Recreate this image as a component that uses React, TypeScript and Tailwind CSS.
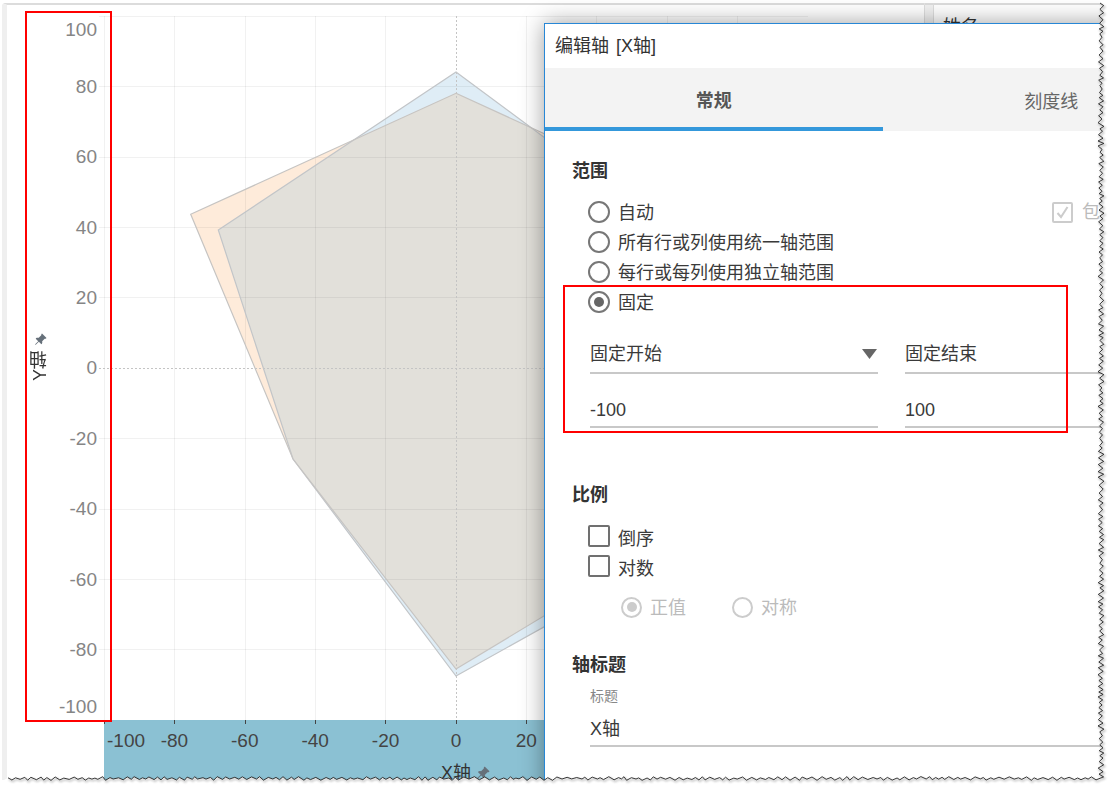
import { BsPinAngleFill } from "react-icons/bs";

const yLabels = ["100", "80", "60", "40", "20", "0", "-20", "-40", "-60", "-80", "-100"];
const xLabels = ["-100", "-80", "-60", "-40", "-20", "0", "20"];
const gridX = [104.5, 174.5, 245.5, 315.5, 385.5, 526.5, 596.5, 667.5, 737.5, 808.5];
const gridY = [16.5, 86.5, 157.5, 227.5, 297.5, 438.5, 509.5, 579.5, 649.5, 720.5];

const BLUE = "456,72 700,253 700,540 456,676 293,459 218.3,230";
const ORANGE = "456,93.3 700,205 700,522 456,669 293,459 190.7,214.3";

function buildTear() {
  let seed = 17;
  const rnd = () => {
    seed = (seed * 16807) % 2147483647;
    return seed / 2147483647;
  };
  const pts: string[] = [];
  let side = 1;
  for (let y = 3; y < 778; y += 2.2 + rnd() * 1.8) {
    side = -side;
    pts.push(`${(1101 + side * (1 + rnd() * 2)).toFixed(1)},${y.toFixed(1)}`);
  }
  for (let x = 1101; x > 4; x -= 2.5 + rnd() * 3) {
    side = -side;
    pts.push(`${x.toFixed(1)},${(778.5 + side * (0.4 + rnd() * 1.5)).toFixed(1)}`);
  }
  return pts.join(" L");
}
const tear = buildTear();

function Radio({ on, muted, size = "w-[22px] h-[22px]" }: { on?: boolean; muted?: boolean; size?: string }) {
  return (
    <span
      className={`${size} shrink-0 rounded-full border-2 flex items-center justify-center ${
        muted ? "border-[#cccccc]" : "border-[#777777]"
      }`}
    >
      {on && <span className={`w-[10px] h-[10px] rounded-full ${muted ? "bg-[#cccccc]" : "bg-[#666666]"}`} />}
    </span>
  );
}

function RadioRow({ label, on, children }: { label: string; on?: boolean; children?: React.ReactNode }) {
  return (
    <div className="h-[30px] flex items-center gap-[8px]">
      <Radio on={on} />
      <span className="whitespace-nowrap pt-[2px]">{label}</span>
      {children}
    </div>
  );
}

function CheckRow({ label }: { label: string }) {
  return (
    <div className="h-[30px] flex items-center gap-[8px]">
      <span className="w-[22px] h-[22px] shrink-0 border-2 border-[#707070] rounded-[2px]" />
      <span className="mt-[5px]">{label}</span>
    </div>
  );
}

function Heading({ children, className = "" }: { children: React.ReactNode; className?: string }) {
  return <div className={`font-bold text-[#333333] ${className}`}>{children}</div>;
}

export default function App() {
  return (
    <div className="relative w-[1113px] h-[790px] overflow-hidden bg-white text-[18px] leading-[26px] text-[#3a3a3a] [font-family:'Liberation_Sans','Noto_Sans_CJK_SC',sans-serif]">
      <div className="flex h-full pt-[3px] pl-[2px]">
        {/* worksheet panel */}
        <div className="w-[923px] h-full shrink-0 border-t-2 border-[#dcdcdc] border-l-[5px] border-l-[#efefef] border-r border-r-[#dddddd] rounded-tl-[3px] flex pt-[11px]">
          {/* Y axis */}
          <div className="w-[90px] shrink-0 h-[704px] flex">
            <div className="w-[23px] shrink-0" />
            <div className="w-[20px] shrink-0 flex items-center justify-center text-[#333333]">
              <div className="flex flex-col items-center gap-[5px] mb-[22px]">
                <BsPinAngleFill className="w-[13px] h-[13px] text-[#66707a]" />
                <span className="[writing-mode:vertical-rl] rotate-180 whitespace-nowrap">Y轴</span>
              </div>
            </div>
            <div className="flex-1 flex flex-col text-[19px] text-[#858585]">
              {yLabels.map((l, i) => (
                <div
                  key={l}
                  className={`flex justify-end ${
                    i === 0
                      ? "h-[35.2px] items-start pt-[1px]"
                      : i === 10
                      ? "h-[35.2px] items-end"
                      : "h-[70.4px] items-center pt-[1px]"
                  }`}
                >
                  {l}
                </div>
              ))}
            </div>
          </div>

          {/* plot + X axis */}
          <div className="ml-[2px] flex flex-col">
            <svg width="709" height="704" viewBox="99 16 709 704" className="block shrink-0">
              <defs>
                <clipPath id="blueClip">
                  <polygon points={BLUE} />
                </clipPath>
              </defs>
              <polygon points={BLUE} fill="#dfedf6" />
              <polygon points={ORANGE} fill="#feebda" />
              <polygon points={ORANGE} fill="#e2e0da" clipPath="url(#blueClip)" />
              {gridX.map((x) => (
                <line key={x} x1={x} x2={x} y1="16" y2="720" stroke="rgba(0,0,0,0.055)" />
              ))}
              {gridY.map((y) => (
                <line key={y} x1="99" x2="808" y1={y} y2={y} stroke="rgba(0,0,0,0.055)" />
              ))}
              <line x1="456.5" x2="456.5" y1="16" y2="720" stroke="#c4c4c4" strokeDasharray="2 2" />
              <line x1="99" x2="808" y1="368.5" y2="368.5" stroke="#c4c4c4" strokeDasharray="2 2" />
              <polygon points={BLUE} fill="none" stroke="#c2c5c8" strokeWidth="1.2" />
              <polygon points={ORANGE} fill="none" stroke="#c6c4c2" strokeWidth="1.2" />
            </svg>
            <div className="ml-[5px] w-[704px] flex-1 bg-[#8bc1d3] text-[#444444]">
              <div className="flex h-[40px] text-[19px]">
                {xLabels.map((l, i) => (
                  <div
                    key={l}
                    className={`h-full flex items-center pt-[2px] whitespace-nowrap ${
                      i === 0 ? "w-[35.2px] justify-start pl-[3px]" : "w-[70.4px] justify-center"
                    }`}
                  >
                    {l}
                  </div>
                ))}
              </div>
              <div className="flex items-center gap-[5px] pl-[337px]">
                <span className="text-[#333333]">X轴</span>
                <BsPinAngleFill className="w-[14px] h-[14px] text-[#66707a]" />
              </div>
            </div>
          </div>
        </div>

        {/* gutter */}
        <div className="w-[8px] h-full shrink-0 bg-[#f1f1f1] border-t-2 border-[#dcdcdc]" />

        {/* side card */}
        <div className="flex-1 h-full border-t-2 border-[#dcdcdc] border-l border-l-[#dddddd] pl-[9px] pt-[9px] text-[#333333]">
          姓名
        </div>
      </div>

      {/* axis ticks sit on the band */}
      <svg width="445" height="5" viewBox="104 720 445 5" className="absolute left-[104px] top-[720px]">
        {[104.5, 174.5, 245.5, 315.5, 385.5, 456.5, 526.5].map((x) => (
          <line key={x} x1={x} x2={x} y1="720" y2="724" stroke="#444444" />
        ))}
      </svg>

      {/* dialog window */}
      <div className="absolute left-[544px] top-[23px] w-[677px] h-[800px] bg-white border border-[#2787d6] shadow-[0_0_22px_rgba(0,0,0,0.38)] text-[#3a3a3a]">
        <div className="h-[44px] pl-[10px] flex items-center text-[#333333] whitespace-nowrap [word-spacing:2px]">编辑轴 [X轴]</div>
        <div className="grid grid-cols-2 h-[63px] bg-[#f3f3f3]">
          <div className="flex items-center justify-center border-b-4 border-[#3498db] font-bold text-[#555555] pt-[7px]">
            常规
          </div>
          <div className="flex items-center justify-center text-[#666666] pt-[4px]">刻度线</div>
        </div>

        <div className="pl-[27px] pt-[27px]">
          <Heading>范围</Heading>
          <div className="pl-[16px] mt-[13px]">
            <RadioRow label="自动">
              <span className="ml-[390px] flex items-center gap-[9px] text-[#bbbbbb] whitespace-nowrap">
                <span className="w-[21px] h-[21px] border-2 border-[#cccccc] rounded-[2px] flex items-center justify-center">
                  <svg width="15" height="15" viewBox="0 0 15 15" fill="none" stroke="#cccccc" strokeWidth="2">
                    <path d="M2.5 8 L6 12 L12.5 2" />
                  </svg>
                </span>
                包含零
              </span>
            </RadioRow>
            <RadioRow label="所有行或列使用统一轴范围" />
            <RadioRow label="每行或每列使用独立轴范围" />
            <RadioRow label="固定" on />
          </div>

          <div className="pl-[18px] mt-[18px] grid grid-cols-[288px_288px] gap-x-[27px] gap-y-[16px]">
            <div className="h-[39px] flex items-center justify-between border-b-2 border-[#c8c8c8]">
              <span>固定开始</span>
              <svg width="15" height="10" viewBox="0 0 15 10" className="mr-[1px]">
                <path d="M0 0 H15 L7.5 10 Z" fill="#666666" />
              </svg>
            </div>
            <div className="h-[39px] flex items-center border-b-2 border-[#c8c8c8]">固定结束</div>
            <div className="h-[38px] flex items-center border-b-2 border-[#c8c8c8] pt-[3px]">-100</div>
            <div className="h-[38px] flex items-center border-b-2 border-[#c8c8c8] pt-[3px]">100</div>
          </div>

          <Heading className="mt-[54px]">比例</Heading>
          <div className="pl-[16px] mt-[13px]">
            <CheckRow label="倒序" />
            <CheckRow label="对数" />
            <div className="h-[30px] mt-[11px] pl-[33px] flex items-center text-[#bbbbbb]">
              <Radio on muted size="w-[21px] h-[21px]" />
              <span className="ml-[8px] pt-[2px]">正值</span>
              <span className="ml-[46px]">
                <Radio muted size="w-[21px] h-[21px]" />
              </span>
              <span className="ml-[8px] pt-[2px]">对称</span>
            </div>
          </div>

          <Heading className="mt-[30px]">轴标题</Heading>
          <div className="pl-[18px]">
            <div className="mt-[8px] h-[20px] text-[14px] leading-[20px] text-[#888888]">标题</div>
            <div className="mt-[7px] h-[34px] w-[603px] flex items-center border-b-2 border-[#c8c8c8]">X轴</div>
          </div>
        </div>
      </div>

      {/* red annotation boxes */}
      <div className="absolute left-[25px] top-[11px] w-[87px] h-[711px] border-2 border-[#ff0000] pointer-events-none" />
      <div className="absolute left-[563px] top-[285px] w-[505px] h-[148px] border-2 border-[#ff0000] pointer-events-none" />

      {/* torn screenshot edge */}
      <svg width="1113" height="790" viewBox="0 0 1113 790" className="absolute inset-0 pointer-events-none">
        <defs>
          <filter id="tearBlur" x="-5%" y="-5%" width="110%" height="110%">
            <feGaussianBlur stdDeviation="0.8" />
          </filter>
        </defs>
        <path d={`M1113,0 L1100,0 L${tear} L4,780 L0,780 L0,790 L1113,790 Z`} fill="#ffffff" />
        <path d={`M${tear}`} fill="none" stroke="#555555" strokeWidth="1.5" opacity="0.4" filter="url(#tearBlur)" transform="translate(1,1.5)" />
        <path d={`M${tear}`} fill="none" stroke="#222222" strokeWidth="0.9" />
      </svg>
    </div>
  );
}
